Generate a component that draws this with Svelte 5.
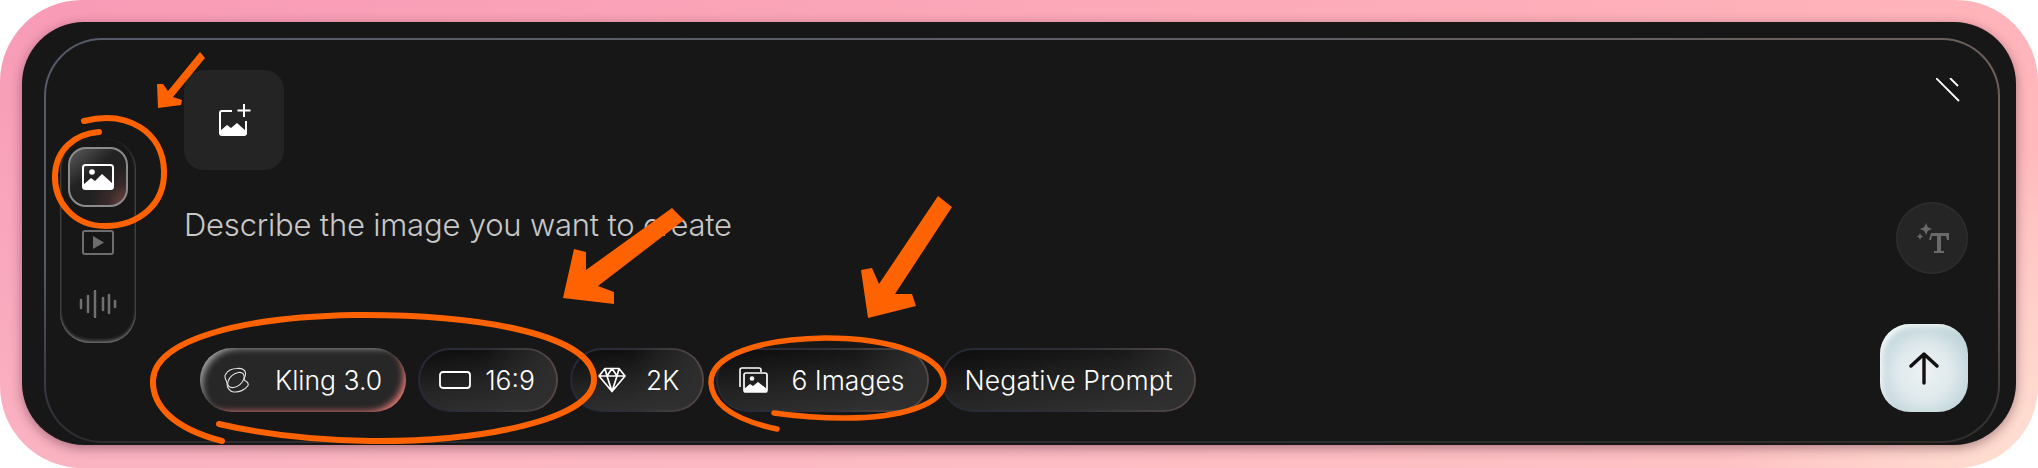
<script>
  const pills = [
    { id: 'kling', label: 'Kling 3.0', active: true },
    { id: 'ratio', label: '16:9' },
    { id: 'res', label: '2K' },
    { id: 'count', label: '6 Images' },
    { id: 'negative', label: 'Negative Prompt' }
  ];
  const bars = [[2, 4], [9, 8], [16, 13], [24, 6], [30, 9], [36, 3]];
</script>

<div class="page">
  <div class="card">
    <div class="frame">
      <div class="rail">
        <button class="tab active" aria-label="Image">
          <svg width="32" height="26" viewBox="0 0 32 26">
            <rect x="1" y="1" width="30" height="24" rx="2.5" fill="none" stroke="#fff" stroke-width="2" />
            <circle cx="10" cy="8" r="2.8" fill="#fff" />
            <path d="M1 21l8-7 4 3 7-7 11 10v5H1z" fill="#fff" />
          </svg>
        </button>
        <button class="tab video" aria-label="Video">
          <svg width="32" height="25" viewBox="0 0 32 25">
            <rect x="1" y="1" width="30" height="23" rx="2" fill="none" stroke="#6e6e6e" stroke-width="2" />
            <path d="M11 6l11 6.500-11 6.500z" fill="#6e6e6e" />
          </svg>
        </button>
        <button class="tab audio" aria-label="Audio">
          <svg width="38" height="28" viewBox="0 0 38 28">
            {#each bars as [x, h]}
              <line x1={x} x2={x} y1={14 - h} y2={14 + h} stroke="#707070" stroke-width="2.500" stroke-linecap="round" />
            {/each}
          </svg>
        </button>
      </div>

      <div class="main">
        <button class="upload" aria-label="Add image">
          <svg width="34" height="34" viewBox="0 0 34 34">
            <path d="M15 8H5a2 2 0 0 0-2 2v20a2 2 0 0 0 2 2h22a2 2 0 0 0 2-2V18" fill="none" stroke="#fff" stroke-width="2" />
            <path d="M3 28l7-6 4 3 6-5 9 8v2a2 2 0 0 1-2 2H5a2 2 0 0 1-2-2z" fill="#fff" />
            <path d="M27 1v13M20.500 7.500h13" stroke="#fff" stroke-width="2" />
          </svg>
        </button>
        <p class="prompt">Describe the image you want to create</p>
        <div class="pills">
          {#each pills as pill}
            <button class="pill {pill.id}" class:active={pill.active}>
              {#if pill.id === 'kling'}
                <svg width="26" height="27" viewBox="0 0 26 27" fill="none" stroke="#e4e4e4" stroke-width="1.100">
                  <path d="M1.500 7.500C4 3 9 1.500 13 1.500c5-.5 9 1.500 8.500 5.500-.3 3-1.500 4-1.500 6 2 1 5 3 4 5.500-3 4.500-9 7-14 6.500-5-.5-7-5-7-8.500 0-3.500-3.500-5.500-1.500-9z" />
                  <ellipse cx="12" cy="13" rx="9.500" ry="6" transform="rotate(-40 12 13)" />
                </svg>
              {:else if pill.id === 'ratio'}
                <svg width="32" height="20" viewBox="0 0 32 20">
                  <rect x="1" y="2" width="30" height="16" rx="3" fill="none" stroke="#fff" stroke-width="1.800" />
                </svg>
              {:else if pill.id === 'res'}
                <svg width="28" height="26" viewBox="0 0 28 26" fill="none" stroke="#fff" stroke-width="1.700" stroke-linejoin="round">
                  <path d="M7 1.500h14l6 7.500-13 15.500L1 9zM1 9h26M9 9l5 15.500L19 9M7 1.500L9 9l5-7.500L19 9l2-7.500" />
                </svg>
              {:else if pill.id === 'count'}
                <svg width="31" height="26" viewBox="0 0 31 26">
                  <path d="M3 20V3a2 2 0 0 1 2-2h17a2 2 0 0 1 2 2v2" fill="none" stroke="#fff" stroke-width="1.600" />
                  <rect x="7" y="6" width="23" height="19" rx="2" fill="none" stroke="#fff" stroke-width="1.700" />
                  <circle cx="15" cy="11.500" r="2.300" fill="#fff" />
                  <path d="M7 22l6-5 3 2 5-4 9 7v3H7z" fill="#fff" />
                </svg>
              {/if}
              <span>{pill.label}</span>
            </button>
          {/each}
        </div>
      </div>

      <div class="side">
        <button class="close" aria-label="Close">
          <svg width="24" height="24" viewBox="0 0 24 24" stroke="#fff" stroke-width="1.800">
            <path d="M0 0l23 23M14 0l8 8" />
          </svg>
        </button>
        <button class="enhance" aria-label="Enhance prompt">
          <svg width="34" height="32" viewBox="0 0 34 32" fill="#6a6a6a">
            <path d="M11 1l1.800 4.200L17 7l-4.200 1.800L11 13 9.200 8.800 5 7l4.200-1.800z" />
            <path d="M5 11l1 2.500L8.500 14.500 6 15.500 5 18l-1-2.500L1.500 14.500 4 13.500z" />
            <path d="M15 11h18v7h-2l-1-4h-5v15h3v2H18v-2h3V14h-5l-1 4h-2z" transform="translate(1 0)" />
          </svg>
        </button>
        <button class="send" aria-label="Send">
          <svg width="30" height="34" viewBox="0 0 30 34" fill="none" stroke="#111" stroke-width="3.400" stroke-linecap="round" stroke-linejoin="round">
            <path d="M15 32V3M2 15L15 3l13 12" />
          </svg>
        </button>
      </div>
    </div>
  </div>

  <!-- hand drawn annotations on top of the screenshot -->
  <svg class="marks" width="2038" height="468" viewBox="0 0 2038 468">
    <g fill="#ff6200">
      <polygon points="200,52 205,58 173,97 182,100 181,105 158,108 157,84 163,84 168,91" />
      <polygon points="672,208 684,220 598,286 614,292 614,304 563,298 574,249 586,252 586,270" />
      <polygon points="938,196 952,207 895,294 912,294 916,306 868,318 861,270 872,268 879,284" />
    </g>
    <g fill="none" stroke="#ff6200" stroke-linecap="round">
      <path d="M84 121C128 110 163 132 164 171C165 205 138 226 105 226C72 226 54 200 55 175C56 150 74 134 99 132" stroke-width="6" />
      <path d="M222 441C172 428 152 405 153 380C155 340 240 317 355 315C480 314 595 335 594 380C593 420 480 442 370 441C310 440 262 434 219 424" stroke-width="6" />
      <path d="M777 429C735 420 712 405 711 383C710 355 760 339 825 338C895 338 944 358 944 382C944 405 900 418 845 418C820 418 795 416 774 413" stroke-width="5.500" />
    </g>
  </svg>
</div>

<style>
  :global(body) {
    margin: 0;
    background: #fff;
  }
  button {
    font: inherit;
    color: inherit;
    padding: 0;
    border: 0;
    background: none;
    display: flex;
    align-items: center;
    justify-content: center;
  }
  .page {
    position: relative;
    width: 2038px;
    height: 468px;
    box-sizing: border-box;
    padding: 22px 22px 23px;
    border-radius: 82px;
    background:
      radial-gradient(circle at 100% 100%, #ffe0d2 0, rgba(255, 224, 210, 0) 320px),
      linear-gradient(180deg, rgba(255, 225, 215, 0) 0%, rgba(255, 225, 215, 0.35) 100%),
      linear-gradient(90deg, #f89ab6 0%, #ffb4ba 100%);
    font-family: Inter, "Liberation Sans", sans-serif;
  }
  .card {
    height: 100%;
    box-sizing: border-box;
    padding: 16px 16px 2px 22px;
    border-radius: 62px;
    background: #171717;
    box-shadow: 0 3px 12px rgba(60, 20, 30, 0.42);
  }
  .frame {
    height: 100%;
    box-sizing: border-box;
    display: flex;
    padding: 30px 30px 29px 14px;
    border: 2px solid transparent;
    border-radius: 58px;
    background:
      linear-gradient(#171717, #171717) padding-box,
      linear-gradient(180deg, rgba(23, 23, 23, 0) 55%, rgba(23, 23, 23, 0.7) 100%) border-box,
      linear-gradient(90deg, #555b6b 0%, #5d5e68 50%, #6b5f5a 100%) border-box;
  }
  .rail {
    align-self: center;
    width: 76px;
    height: 204px;
    box-sizing: border-box;
    flex-shrink: 0;
    display: flex;
    flex-direction: column;
    align-items: center;
    padding-top: 8px;
    border-radius: 30px;
    box-shadow: inset 0 -3px 4px -2px rgba(255, 255, 255, 0.55), inset 2px 0 2px -1px rgba(255, 255, 255, 0.16), inset -2px 0 2px -1px rgba(255, 255, 255, 0.16);
  }
  .tab {
    flex-shrink: 0;
  }
  .tab.active {
    width: 60px;
    height: 60px;
    box-sizing: border-box;
    border: 2px solid #8b8b8b;
    border-radius: 18px;
    background: radial-gradient(circle at 105% 100%, #7a4a48 0%, #3a2a2a 26%, transparent 50%), linear-gradient(140deg, #5c5c5c, #222 40%, #1d1d1d);
  }
  .tab.video {
    height: 25px;
    margin-top: 23px;
  }
  .tab.audio {
    height: 28px;
    margin-top: 35px;
  }
  .main {
    flex: 1;
    margin-left: 48px;
    display: flex;
    flex-direction: column;
    align-items: flex-start;
  }
  .upload {
    width: 100px;
    height: 100px;
    border-radius: 20px;
    background: #242424;
  }
  .prompt {
    margin: 36px 0 0;
    font-size: 31px;
    line-height: 38px;
    font-weight: 300;
    letter-spacing: -0.2px;
    color: #c8c8c8;
  }
  .pills {
    margin-top: auto;
    margin-left: 16px;
    display: flex;
    gap: 12px;
  }
  .pill {
    height: 64px;
    box-sizing: border-box;
    gap: 20px;
    padding: 0 21px;
    border: 2px solid transparent;
    border-radius: 32px;
    color: #fff;
    font-size: 26.5px;
    font-weight: 300;
    white-space: nowrap;
    background:
      linear-gradient(270deg, #2e2e2e 0, rgba(46, 46, 46, 0) 70px) padding-box,
      linear-gradient(172deg, #101010 8%, #232323 50%, #343434) padding-box,
      linear-gradient(90deg, #252937 0%, #2d2e36 50%, #544a45 100%) border-box;
  }
  .pill.active {
    gap: 25px;
    padding: 0 24px;
    border: 0;
    background: #272727;
    box-shadow: inset 7px 5px 7px -5px rgba(255, 255, 255, 0.6), inset -7px -5px 7px -5px rgba(245, 130, 125, 0.95);
  }
  .pill.ratio {
    gap: 14px;
    padding: 0 21px 0 19px;
  }
  .pill.res {
    padding: 0 23px 0 26px;
  }
  .pill.count {
    gap: 23px;
    padding: 0 23px 0 19px;
  }
  .pill.negative {
    padding: 0 21px;
    letter-spacing: 0.2px;
  }
  .side {
    width: 88px;
    flex-shrink: 0;
    display: flex;
    flex-direction: column;
    align-items: flex-end;
  }
  .close {
    margin: 8px 8px 0 0;
  }
  .enhance {
    margin-top: 100px;
    width: 72px;
    height: 72px;
    border-radius: 50%;
    background: #252525;
    box-shadow: inset 0 0 0 1.500px #2d2d2d;
  }
  .send {
    margin-top: auto;
    width: 88px;
    height: 88px;
    border-radius: 30px;
    background: radial-gradient(circle at 50% 55%, #eef2f3 0%, #dfe9ec 42%, #a9c6cd 100%);
    box-shadow: inset 5px 5px 6px -3px rgba(255, 255, 255, 0.9);
  }
  .marks {
    position: absolute;
    left: 0;
    top: 0;
    pointer-events: none;
  }
</style>
